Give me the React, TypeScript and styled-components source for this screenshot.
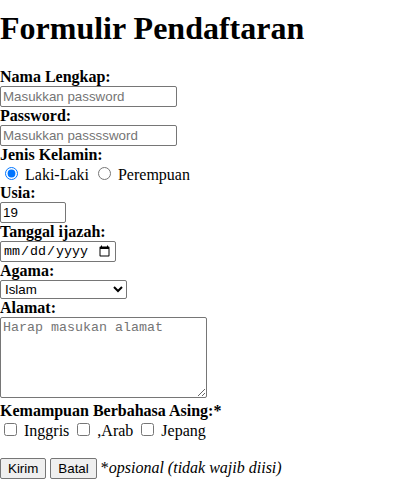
import React from 'react';
import styled, { createGlobalStyle } from 'styled-components';

const GlobalStyle = createGlobalStyle`
  body {
    margin: 0;
    font-family: "Liberation Serif", "Times New Roman", serif;
    font-size: 16px;
    color: #000;
    background: #fff;
  }
`;

const Title = styled.h1`
  font-size: 32px;
  font-weight: bold;
  margin: 10px 0 21px;
`;

const Form = styled.form`
  display: block;
`;

const Line = styled.div<{ $gapTop?: boolean }>`
  margin-top: ${(p) => (p.$gapTop ? '18px' : '0')};
`;

const Label = styled.label`
  font-weight: bold;
`;

const TextInput = styled.input<{ $width?: number }>`
  box-sizing: border-box;
  width: ${(p) => p.$width ?? 177}px;
  height: 21px;
  font-family: "Liberation Sans", Arial, sans-serif;
  font-size: 13.333px;
  padding: 1px 2px;
  border: 1px solid #767676;
  border-radius: 2px;
  &::placeholder {
    color: #757575;
  }
`;

const DateInput = styled.input`
  box-sizing: border-box;
  width: 116px;
  height: 21px;
  font-family: "Liberation Mono", "Courier New", monospace;
  font-size: 13.333px;
  padding: 1px 2px;
  border: 1px solid #767676;
  border-radius: 2px;
`;

const Select = styled.select`
  box-sizing: border-box;
  width: 127px;
  height: 19px;
  font-family: "Liberation Sans", Arial, sans-serif;
  font-size: 13.333px;
  border: 1px solid #767676;
  border-radius: 2px;
  background: #fff;
`;

const TextArea = styled.textarea`
  box-sizing: border-box;
  width: 207px;
  height: 81px;
  font-family: "Liberation Mono", "Courier New", monospace;
  font-size: 13.333px;
  padding: 2px;
  border: 1px solid #767676;
  border-radius: 2px;
  &::placeholder {
    color: #757575;
  }
`;

const Radio = styled.input`
  margin: 3px 3px 0 5px;
`;

const Check = styled.input`
  margin: 3px 3px 3px 4px;
`;

const Button = styled.button`
  font-family: "Liberation Sans", Arial, sans-serif;
  font-size: 13.333px;
  padding: 1px 7px;
  height: 21px;
  border: 1px solid #767676;
  border-radius: 2px;
  background: #efefef;
  color: #000;
`;

const Note = styled.span`
  font-style: italic;
`;

const App: React.FC = () => (
  <>
    <GlobalStyle />
    <Title>Formulir Pendaftaran</Title>
    <Form onSubmit={(e) => e.preventDefault()}>
      <Line><Label htmlFor="nama">Nama Lengkap:</Label></Line>
      <Line><TextInput id="nama" type="text" placeholder="Masukkan password" /></Line>
      <Line><Label htmlFor="pass">Password:</Label></Line>
      <Line><TextInput id="pass" type="password" placeholder="Masukkan passssword" /></Line>
      <Line><Label>Jenis Kelamin:</Label></Line>
      <Line>
        <Radio type="radio" name="jk" defaultChecked /> Laki-Laki{' '}
        <Radio type="radio" name="jk" /> Perempuan
      </Line>
      <Line><Label htmlFor="usia">Usia:</Label></Line>
      <Line><TextInput id="usia" type="number" $width={66} defaultValue={19} /></Line>
      <Line><Label htmlFor="tgl">Tanggal ijazah:</Label></Line>
      <Line><DateInput id="tgl" type="date" /></Line>
      <Line><Label htmlFor="agama">Agama:</Label></Line>
      <Line>
        <Select id="agama" defaultValue="Islam">
          <option>Islam</option>
          <option>Kristen</option>
          <option>Katolik</option>
          <option>Hindu</option>
          <option>Buddha</option>
          <option>Konghucu</option>
        </Select>
      </Line>
      <Line><Label htmlFor="alamat">Alamat:</Label></Line>
      <Line><TextArea id="alamat" placeholder="Harap masukan alamat" /></Line>
      <Line><Label>Kemampuan Berbahasa Asing:</Label><Label>*</Label></Line>
      <Line>
        <Check type="checkbox" /> Inggris{' '}
        <Check type="checkbox" /> ,Arab{' '}
        <Check type="checkbox" /> Jepang
      </Line>
      <Line $gapTop>
        <Button type="submit">Kirim</Button>{' '}
        <Button type="reset">Batal</Button>{' '}
        *<Note>opsional (tidak wajib diisi)</Note>
      </Line>
    </Form>
  </>
);

export default App;
